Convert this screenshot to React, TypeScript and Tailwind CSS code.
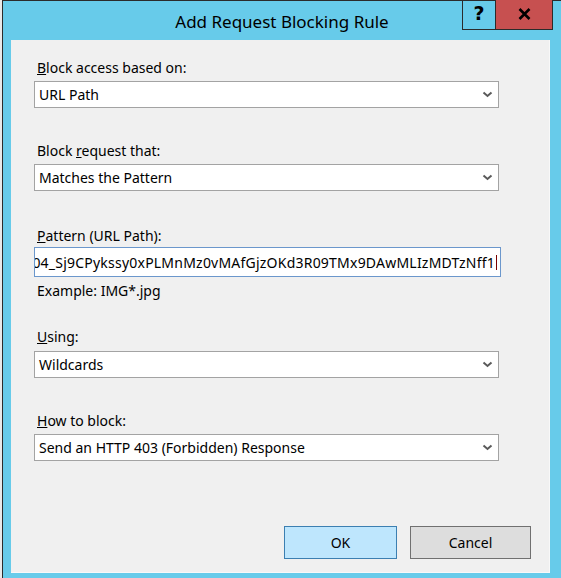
import React from "react";

const font = { fontFamily: '"Noto Sans", "Open Sans", Arial, sans-serif' };

function Chevron() {
  return (
    <svg width="11" height="7" viewBox="0 0 11 7" className="shrink-0">
      <polyline points="1.5,1.5 5.5,5 9.5,1.5" fill="none" stroke="#5a5a5a" strokeWidth="2" />
    </svg>
  );
}

function Combo({ value, className = "" }: { value: string; className?: string }) {
  return (
    <div
      className={`w-[465px] h-[27px] bg-white border border-[#a3a3a3] flex items-center pl-[4px] pr-[5px] text-[14px] text-black ${className}`}
    >
      <span className="flex-1 whitespace-nowrap">{value}</span>
      <Chevron />
    </div>
  );
}

function Label({ children, className = "" }: { children: React.ReactNode; className?: string }) {
  return <div className={`h-[20px] leading-[20px] pl-[3px] text-[14px] text-black ${className}`}>{children}</div>;
}

export default function App() {
  return (
    <div className="w-[561px] h-[578px] flex bg-[#e6e6e6]" style={font}>
      <div className="w-[2px] bg-[#e9e9e9]" />
      <div className="flex-1 flex flex-col bg-[#67cbea] border-l border-t border-[#2b2b2b]">
        {/* title bar */}
        <div className="h-[39px] grid grid-cols-[1fr_auto_1fr]">
          <div />
          <div className="pt-[9px] text-[17px] leading-[24px] text-black whitespace-nowrap">
            Add Request Blocking Rule
          </div>
          <div className="flex justify-end items-start pr-[8px]">
            <div className="-mt-[1px] flex h-[30px] border-l border-r border-b border-[#2b2b2b]">
              <div className="w-[33px] flex items-center justify-center border-r border-[#2b2b2b]">
                <span className="text-[19px] font-bold leading-none text-black -mt-[3px]" style={{ fontFamily: '"DejaVu Sans", sans-serif' }}>?</span>
              </div>
              <div className="w-[56px] bg-[#c75050] flex items-center justify-center">
                <svg width="13" height="12" viewBox="0 0 13 12" className="-mt-[1px]">
                  <path d="M1.5 1 L11.5 11 M11.5 1 L1.5 11" stroke="#000" strokeWidth="2.6" />
                </svg>
              </div>
            </div>
          </div>
        </div>
        {/* content */}
        <div className="flex-1 ml-[8px] mr-[11px] mb-[5px] bg-[#f0f0f0] border-r border-b border-[#f8f8f8] flex flex-col pl-[23px]">
          <Label className="mt-[18px]">
            <span className="underline">B</span>lock access based on:
          </Label>
          <Combo value="URL Path" className="mt-[3px]" />
          <Label className="mt-[33px]">
            Block <span className="underline">r</span>equest that:
          </Label>
          <Combo value="Matches the Pattern" className="mt-[3px]" />
          <Label className="mt-[35px]">
            <span className="underline">P</span>attern (URL Path):
          </Label>
          <div className="mt-[1px] w-[467px] h-[30px] bg-white border border-[#6b97cc] flex items-center justify-end overflow-hidden pr-[3px] text-[14px] tracking-[0.22px] text-black whitespace-nowrap">
            <span>04_Sj9CPykssy0xPLMnMz0vMAfGjzOKd3R09TMx9DAwMLIzMDTzNff1</span>
            <span className="w-[1px] h-[15px] bg-[#7a0000] ml-[1px] shrink-0" />
          </div>
          <Label className="mt-[4px] pl-[2px]">Example: IMG*.jpg</Label>
          <Label className="mt-[26px]">
            <span className="underline">U</span>sing:
          </Label>
          <Combo value="Wildcards" className="mt-[4px]" />
          <Label className="mt-[33px]">
            <span className="underline">H</span>ow to block:
          </Label>
          <Combo value="Send an HTTP 403 (Forbidden) Response" className="mt-[3px]" />
          <div className="mt-auto mb-[13px] flex justify-end gap-[13px] pr-[18px]">
            <div className="w-[113px] h-[33px] bg-[#bee6fd] border border-[#3c7fb1] flex items-center justify-center text-[14px] text-black">
              OK
            </div>
            <div className="w-[121px] h-[33px] bg-[#dddddd] border border-[#707070] flex items-center justify-center text-[14px] text-black">
              Cancel
            </div>
          </div>
        </div>
      </div>
    </div>
  );
}
